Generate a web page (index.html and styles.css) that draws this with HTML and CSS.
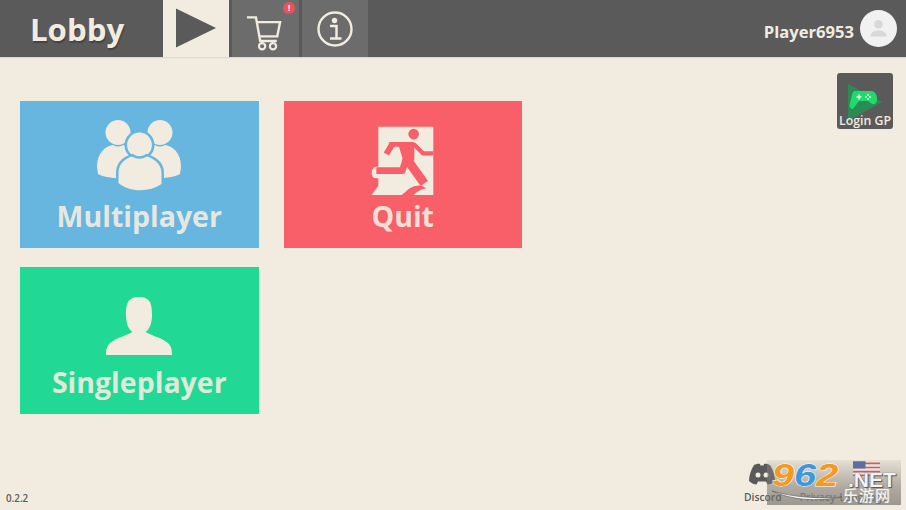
FILE: index.html
```html
<!DOCTYPE html>
<html lang="en">
<head>
<meta charset="utf-8">
<title>Lobby</title>
<link rel="stylesheet" href="styles.css">
</head>
<body>
<header class="topbar">
  <div class="title">Lobby</div>
  <div class="tab tab-active">
    <svg class="play" viewBox="0 0 42 40"><path d="M0 0 L41 20 L0 40 Z"/></svg>
  </div>
  <div class="tab tab-cart">
    <svg class="cart" viewBox="0 0 38 38" fill="none"><path d="M1 2.500H10.500L15 27.500H32.500M11.500 7.500H36L33 22.500H14" stroke="#f2ece0" stroke-width="2.500"/><circle cx="17" cy="33" r="3.300" stroke="#f2ece0" stroke-width="2.300"/><circle cx="28.500" cy="33" r="3.300" stroke="#f2ece0" stroke-width="2.300"/></svg>
    <span class="badge">!</span>
  </div>
  <div class="tab tab-info">
    <svg class="info" viewBox="0 0 36 36" fill="none"><circle cx="18" cy="18" r="16.500" stroke="#f2ece0" stroke-width="2.400"/><circle cx="17.500" cy="9.500" r="2.700" fill="#f2ece0"/><path d="M13 15H19.500V27.500M13 27.500H24.500" stroke="#f2ece0" stroke-width="2.500"/></svg>
  </div>
  <div class="user">
    <span class="username">Player6953</span>
    <span class="avatar">
      <svg viewBox="0 0 37 37"><circle cx="18.500" cy="14.300" r="4.300" fill="#d8d8d8"/><path d="M10.500 26.500C10.500 21.500 15 20.500 18.500 20.500S26.500 21.500 26.500 26.500Z" fill="#d8d8d8"/></svg>
    </span>
  </div>
</header>

<main class="content">
  <div class="grid">
    <a class="card card-blue">
      <svg class="icon icon-multi" viewBox="0 0 84 71">
        <circle cx="21" cy="12.500" r="12.500" fill="#f2ece0"/>
        <circle cx="63" cy="12.500" r="12.500" fill="#f2ece0"/>
        <path d="M0 47C0 33 8 26 16 25Q21 28 26 25L40 30V58C30 59 10 59 1 54Z" fill="#f2ece0"/>
        <path d="M84 47C84 33 76 26 68 25Q63 28 58 25L44 30V58C54 59 74 59 83 54Z" fill="#f2ece0"/>
        <circle cx="42.500" cy="25" r="13.700" fill="#f2ece0" stroke="#66b6df" stroke-width="2.600"/>
        <path d="M21.500 63V53C21.500 43 29 38.500 35 36.500Q42.500 41 50 36.500C56 38.500 64.500 43 64.500 53V64C52 72.500 33 72.500 21.500 63Z" fill="#f2ece0" stroke="#66b6df" stroke-width="5" paint-order="stroke"/>
      </svg>
      <span class="label">Multiplayer</span>
    </a>
    <a class="card card-red">
      <svg class="icon icon-exit" viewBox="20 18 190 210">
        <path d="M42 20H207V225H22L42 197Z" fill="#f2ece0"/>
        <path d="M46 140H34Q22 144 22 158Q22 175 36 175H46Z" fill="#f2ece0"/>
        <circle cx="148" cy="42" r="16" fill="#f95f68"/>
        <path d="M72 66H150L150 122L116 120L104 80H88Z" fill="#f95f68"/>
        <path d="M84 72L66 102" stroke="#f95f68" stroke-width="18" fill="none"/>
        <path d="M148 72L176 100H207" stroke="#f95f68" stroke-width="13" fill="none"/>
        <path d="M128 108L114 152H36" stroke="#f95f68" stroke-width="20" fill="none" stroke-linejoin="round"/>
        <path d="M124 112L180 190" stroke="#f95f68" stroke-width="27" fill="none"/>
        <path d="M112 225L136 205Q150 195 172 197L186 205Q165 208 148 225Z" fill="#f95f68"/>
      </svg>
      <span class="label">Quit</span>
    </a>
    <a class="card card-green">
      <svg class="icon icon-single" viewBox="0 0 66 58">
        <path d="M33 0C21 0 20 8 20 18C20 27 23 33 26.500 35C22 38 13 40 7 44C2 47 0 50 0 58H66C66 50 64 47 59 44C53 40 44 38 39.500 35C43 33 46 27 46 18C46 8 45 0 33 0Z" fill="#f2ece0"/>
      </svg>
      <span class="label">Singleplayer</span>
    </a>
  </div>

  <div class="login-gp">
    <svg viewBox="0 0 34 38"><path d="M0 1 L34 19 L0 38 Z" fill="#2e8a55"/><path d="M7 8H23C27 8 29 12 29 16C29 20 27 22 24 21L20 18H11L5 26C2 26 1 23 2 20L4 12C4.500 9.500 5.500 8 7 8Z" fill="#1fdb6e"/><path d="M8.500 14H13.500M11 11.500V16.500" stroke="#f2ece0" stroke-width="1.500"/><circle cx="20" cy="12" r="1" fill="#f2ece0"/><circle cx="20" cy="16" r="1" fill="#f2ece0"/><circle cx="18" cy="14" r="1" fill="#f2ece0"/><circle cx="22" cy="14" r="1" fill="#f2ece0"/></svg>
    <span>Login GP</span>
  </div>

  <footer class="footer">
    <span class="version">0.2.2</span>
    <div class="links">
      <div class="link">
        <svg class="discord" viewBox="0 0 28 22"><path d="M6 2C9 .5 11 .500 12 1L12.500 2.500H15.500L16 1C17 .5 19 .5 22 2C25 7 27 12 27 18C24.500 20.500 21.500 21.500 19.500 21.500L18 18.500H10L8.500 21.500C6.500 21.500 3.500 20.500 1 18C1 12 3 7 6 2Z" fill="#5a5a5a"/><circle cx="10" cy="12" r="2.500" fill="#f2ece0"/><circle cx="18" cy="12" r="2.500" fill="#f2ece0"/></svg>
        <span>Discord</span>
      </div>
      <div class="link link-faint"><span>Privacy</span></div>
      <div class="link link-faint link-lang"><span>Language</span></div>
    </div>
  </footer>

  <div class="watermark">
    <svg class="wm-flag" viewBox="0 0 26 14"><rect width="26" height="14" fill="#e8e4e0"/><path d="M0 2H26M0 6H26M0 10H26M0 13.500H26" stroke="#c9605f" stroke-width="1.600"/><rect width="12" height="7" fill="#5b6ea0"/></svg>
    <svg class="wm-swoosh" viewBox="0 0 72 12" fill="none"><path d="M1 1C20 10 45 12 71 7C46 9 22 7 1 1Z" fill="#f4f4f4" stroke="#555" stroke-width=".6"/></svg>
    <div class="wm-row">
      <span class="wm-num"><span class="wm-o">9</span><span class="wm-b">6</span><span class="wm-o">2</span></span>
      <span class="wm-net">.NET</span>
    </div>
    <div class="wm-cn">乐游网</div>
  </div>
</main>
</body>
</html>
```
FILE: styles.css
```css
* { box-sizing: border-box; }
html, body { margin: 0; height: 510px; overflow: hidden; }
body {
  width: 906px;
  background: #f2ece0;
  font-family: "Open Sans", "Noto Sans", sans-serif;
  font-weight: 700;
  color: #f2ece0;
  display: flex;
  flex-direction: column;
}
.topbar {
  height: 57px;
  flex: none;
  background: #5a5a5a;
  display: flex;
  align-items: stretch;
  box-shadow: 0 1px 1px rgba(0,0,0,.08);
}
.title {
  width: 163px;
  padding-left: 30px;
  font-size: 31.200px;
  line-height: 58px;
  text-shadow: 1px 2px 1px rgba(0,0,0,.25);
}
.tab {
  width: 66px;
  display: flex;
  align-items: center;
  justify-content: center;
  position: relative;
}
.tab-active { background: #f2ece0; margin-right: 3px; }
.tab-cart { background: #6c6c6c; width: 67px; margin-right: 3px; }
.tab-info { background: #6c6c6c; }
.play { width: 41px; height: 40px; fill: #5a5a5a; margin-left: 1px; margin-top: -1px; }
.cart { width: 36px; height: 36px; margin-left: -4px; margin-top: 8px; }
.badge {
  position: absolute;
  left: 51px;
  top: 2px;
  width: 12px;
  height: 12px;
  border-radius: 50%;
  background: #e9525c;
  font-size: 9px;
  line-height: 12px;
  text-align: center;
  color: #f2ece0;
}
.info { width: 36px; height: 36px; }
.user {
  margin-left: auto;
  display: flex;
  align-items: center;
  gap: 6px;
  padding-right: 9px;
}
.username { font-size: 16.600px; margin-top: 6px; }
.avatar {
  width: 37px;
  height: 37px;
  border-radius: 50%;
  background: #f1f1f1;
  display: block;
  margin-top: -1px;
}
.avatar svg { display: block; width: 37px; height: 37px; }
.content { position: relative; flex: 1; padding: 44px 20px 0; }
.grid {
  display: grid;
  grid-template-columns: 238.500px 238.500px;
  grid-auto-rows: 147px;
  column-gap: 25px;
  row-gap: 19px;
}
.card { position: relative; display: block; }
.card-blue { background: #66b6df; }
.card-red { background: #f95f68; }
.card-green { background: #22d895; }
.icon { display: block; position: absolute; }
.icon-multi { width: 84px; height: 71px; top: 19px; left: 77px; }
.icon-exit { width: 63.300px; height: 70px; top: 25px; left: 87.700px; }
.icon-single { width: 66px; height: 58px; top: 30px; left: 86px; }
.label {
  position: absolute;
  left: 0;
  right: 0;
  top: 95px;
  text-align: center;
  font-size: 28.500px;
  line-height: 40px;
  opacity: .92;
}
.login-gp {
  position: absolute;
  left: 837px;
  top: 16px;
  width: 56px;
  height: 56px;
  background: #5a5a5a;
  border-radius: 3px;
}
.login-gp svg { position: absolute; left: 11px; top: 10px; width: 34px; height: 38px; }
.login-gp span {
  position: absolute;
  left: 0;
  right: 0;
  top: 40px;
  text-align: center;
  font-size: 12.300px;
  font-weight: 600;
  line-height: 15px;
  white-space: nowrap;
}
.footer { position: absolute; left: 0; right: 0; bottom: 0; height: 50px; color: #5a5a5a; }
.version { position: absolute; left: 6px; top: 32px; font-size: 9.800px; font-weight: 600; line-height: 14px; }
.links { position: absolute; left: 744px; top: 3px; display: flex; gap: 18px; }
.link { display: flex; flex-direction: column; align-items: center; font-size: 10.300px; font-weight: 600; line-height: 14px; }
.link span { margin-top: 5px; }
.discord { width: 28px; height: 22px; margin-right: 2px; }
.link-faint { padding-top: 22px; opacity: .7; }
.link-lang { margin-left: -14px; }
.watermark {
  position: absolute;
  left: 767px;
  top: 403px;
  width: 134px;
  height: 45px;
  background: linear-gradient(180deg, rgba(190,185,180,.25) 0%, rgba(120,115,110,.55) 60%, rgba(110,105,100,.65) 100%);
}
.wm-flag { position: absolute; left: 86px; top: 1px; width: 27px; height: 15px; }
.wm-swoosh { position: absolute; left: 4px; top: 30px; width: 72px; height: 12px; }
.wm-row { position: absolute; left: 5px; top: 0; right: 0; height: 30px; }
.wm-num {
  position: absolute;
  left: 0;
  top: 1px;
  font-family: "Liberation Sans", sans-serif;
  font-style: italic;
  font-weight: 700;
  font-size: 31px;
  line-height: 30px;
  transform: scaleX(1.28);
  transform-origin: left center;
  white-space: nowrap;
  -webkit-text-stroke: 1px #fff;
  paint-order: stroke fill;
}
.wm-o { color: #f39a1f; }
.wm-b { color: #3f97dc; }
.wm-net {
  position: absolute;
  left: 76px;
  top: 8px;
  font-family: "Liberation Sans", sans-serif;
  font-weight: 700;
  font-size: 21px;
  line-height: 24px;
  color: #f4f4f4;
  text-shadow: 0 0 1px #444, 1px 1px 1px #555;
  white-space: nowrap;
}
.wm-cn {
  position: absolute;
  left: 76px;
  top: 26px;
  font-family: "Noto Sans CJK SC", sans-serif;
  font-weight: 500;
  font-size: 15px;
  line-height: 18px;
  color: #f4f4f4;
  letter-spacing: 1px;
  white-space: nowrap;
}
```
